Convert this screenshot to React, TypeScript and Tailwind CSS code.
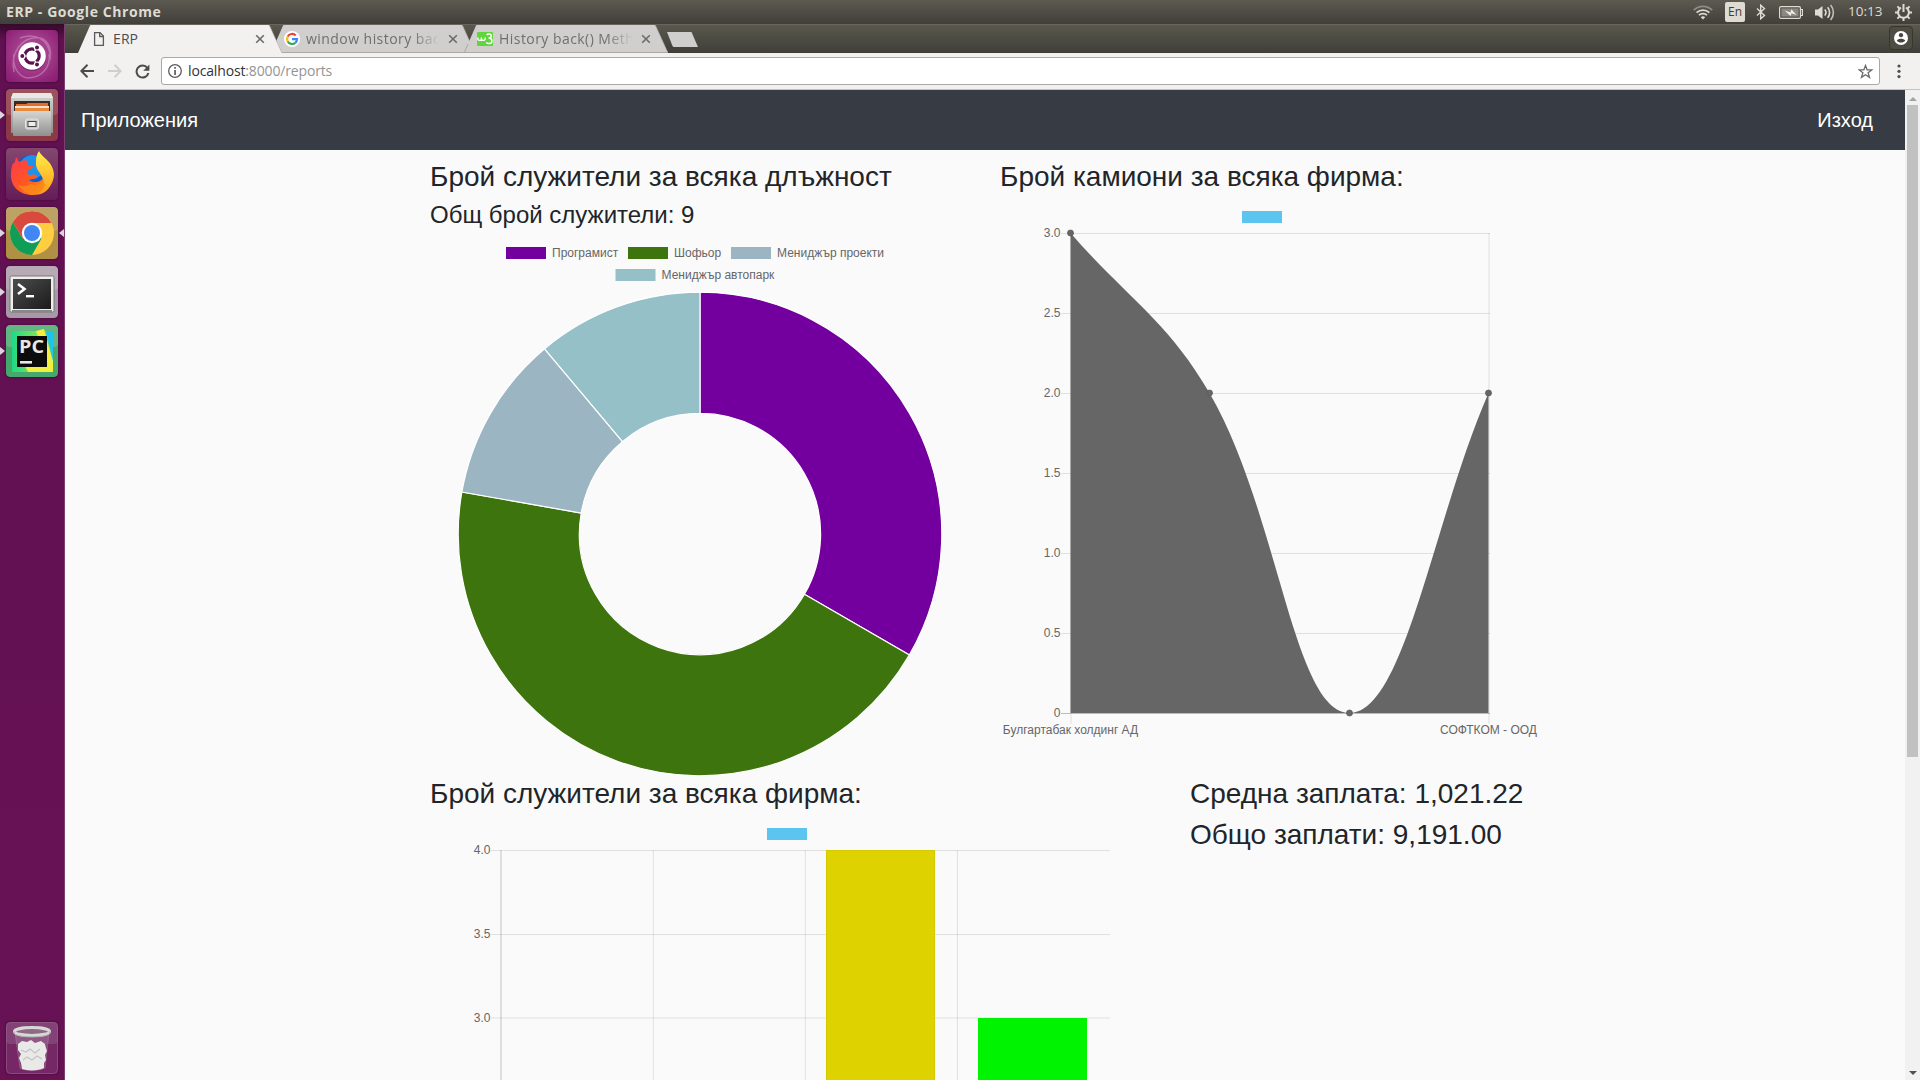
import React from "react";

type Slice = { label: string; value: number; color: string };

const positions: Slice[] = [
  { label: "Програмист", value: 3, color: "#73009e" },
  { label: "Шофьор", value: 4, color: "#3d740d" },
  { label: "Мениджър проекти", value: 1, color: "#9cb5c2" },
  { label: "Мениджър автопарк", value: 1, color: "#96c0c8" },
];

const chartFont = "font-['Liberation_Sans',Arial,sans-serif] text-[12px]";

function WifiIcon() {
  return (
    <svg width="20" height="15" viewBox="0 0 20 15" fill="none" stroke="#dfdbd2" strokeWidth="1.7">
      <path d="M.8 5.2a13 13 0 0 1 18.4 0" stroke="#8f8c84" />
      <path d="M3.6 7.6a9.3 9.3 0 0 1 12.8 0" />
      <path d="M6 10.2a5.8 5.8 0 0 1 8 0" />
      <path d="M7.8 12.2a3.2 3.2 0 0 1 4.4 0L10 14.5z" fill="#dfdbd2" stroke="none" />
    </svg>
  );
}

function BluetoothIcon() {
  return (
    <svg width="10" height="16" viewBox="0 0 10 16" fill="none" stroke="#dfdbd2" strokeWidth="1.4">
      <path d="M1 4.5l7.5 7-3.8 3.3V1.2l3.8 3.3L1 11.5" />
    </svg>
  );
}

function BatteryIcon() {
  return (
    <svg width="24" height="13" viewBox="0 0 24 13">
      <rect x=".6" y=".6" width="20.8" height="11.8" rx="1.4" fill="none" stroke="#dfdbd2" strokeWidth="1.2" />
      <rect x="2.4" y="2.4" width="17.2" height="8.2" fill="#8b8881" />
      <path d="M22 3.5h1.4v6H22" fill="none" stroke="#dfdbd2" strokeWidth="1.2" />
      <path d="M5.500 4.500l6 1.900.8-3.200L17.500 9l-5-1.700-.8 2.700z" fill="#f2efe8" />
    </svg>
  );
}

function VolumeIcon() {
  return (
    <svg width="20" height="17" viewBox="0 0 20 17" fill="none" stroke="#dfdbd2" strokeWidth="1.6">
      <path d="M0 5.5h3L7.5 2v13L3 11.5H0z" fill="#dfdbd2" stroke="none" />
      <path d="M9.7 5.5a4.6 4.6 0 0 1 0 6" />
      <path d="M12.6 3.2a8 8 0 0 1 0 10.6" />
      <path d="M15.6 1a11.5 11.5 0 0 1 0 15" stroke="#c2beb6" />
    </svg>
  );
}

function SessionIcon() {
  return (
    <svg width="17" height="17" viewBox="0 0 17 17" fill="none" stroke="#dfdbd2">
      <path d="M6 3.6a5.4 5.4 0 1 0 5 0" strokeWidth="2" />
      <path d="M8.5 0v8" strokeWidth="2" />
      <path d="M2.4 2.4l2 2M14.6 2.4l-2 2M0 8.5h3M14 8.5h3M2.4 14.6l2-2M14.6 14.6l-2-2M8.5 14v3" strokeWidth="2" />
    </svg>
  );
}

function TopPanel() {
  return (
    <header className="flex h-6 shrink-0 items-center justify-between bg-gradient-to-b from-[#5c5a50] to-[#403f3a] pl-1.5 pr-2 text-[#dfdbd2]">
      <div className="mb-[2px] whitespace-nowrap font-['Open_Sans','Noto_Sans',sans-serif] text-[14px] font-bold tracking-[0.58px]">ERP - Google Chrome</div>
      <div className="flex items-center">
        <WifiIcon />
        <div className="ml-3 flex h-5 w-5 items-center justify-center rounded-[2px] bg-[#dfdbd2] font-['Open_Sans','Noto_Sans',sans-serif] text-[12px] text-[#3c3b37]">En</div>
        <div className="ml-[11px]"><BluetoothIcon /></div>
        <div className="ml-[13px]"><BatteryIcon /></div>
        <div className="ml-3"><VolumeIcon /></div>
        <div className="mb-[1px] ml-[13px] w-[36px] whitespace-nowrap font-['Open_Sans','Noto_Sans',sans-serif] text-[13.5px] tracking-normal">10:13</div>
        <div className="ml-[11px]"><SessionIcon /></div>
      </div>
    </header>
  );
}

function UbuntuIcon() {
  return (
    <svg width="52" height="52" viewBox="0 0 52 52">
      <defs>
        <radialGradient id="dash" cx="50%" cy="45%" r="65%">
          <stop offset="0" stopColor="#b65aa0" />
          <stop offset="1" stopColor="#8d1f74" />
        </radialGradient>
      </defs>
      <rect width="52" height="52" rx="4" fill="url(#dash)" />
      <path d="M8 42C4 22 16 6 34 8c8 2 12 10 10 22M43 24c2 14-8 24-22 24C12 46 6 36 8 24M14 8c16-6 28 2 30 16" fill="none" stroke="#d79bc9" strokeOpacity=".5" strokeWidth="1.5" />
      <circle cx="26" cy="27" r="14" fill="#5d1250" opacity=".5" />
      <circle cx="26" cy="26" r="13.8" fill="#fff" />
      <circle cx="26" cy="26" r="7.2" fill="none" stroke="#5d1250" strokeWidth="3.2" />
      <g stroke="#fff" strokeWidth="1.2">
        <path d="M26 26L15 26M26 26l6-10.4M26 26l6 10.4" />
        <circle cx="16.3" cy="26" r="2.6" fill="#5d1250" />
        <circle cx="31" cy="17.4" r="2.6" fill="#5d1250" />
        <circle cx="31" cy="34.6" r="2.6" fill="#5d1250" />
      </g>
      <circle cx="26" cy="26" r="5" fill="#fff" />
    </svg>
  );
}

function FilesIcon() {
  return (
    <svg width="52" height="52" viewBox="0 0 52 52">
      <defs>
        <linearGradient id="cab" x1="0" y1="0" x2="0" y2="1">
          <stop offset="0" stopColor="#d6d6d4" />
          <stop offset="1" stopColor="#8f8f8d" />
        </linearGradient>
      </defs>
      <rect width="52" height="52" rx="4" fill="#8c3846" />
      <rect width="52" height="26" rx="4" fill="#a9636b" opacity=".6" />
      <path d="M7 4h38l2 5v35H5V9z" fill="url(#cab)" />
      <path d="M7 4h38l2 5H5z" fill="#e8e8e6" />
      <rect x="8" y="12" width="36" height="11" fill="#3b2a24" />
      <path d="M10 15h10l2-1h20v9H10z" fill="#e26f2a" />
      <rect x="9" y="17" width="34" height="2" fill="#f6e3cf" />
      <rect x="9" y="19" width="34" height="4" fill="#ea8a3b" />
      <rect x="7" y="22" width="38" height="25" rx="1" fill="url(#cab)" />
      <rect x="19.5" y="30" width="13" height="10" rx="2" fill="#c9c9c7" stroke="#e4e4e2" />
      <rect x="22" y="32.5" width="8" height="5" fill="#eee" stroke="#444" />
    </svg>
  );
}

function FirefoxIcon() {
  return (
    <svg width="52" height="52" viewBox="0 0 52 52">
      <defs>
        <linearGradient id="ffa" x1="0" y1="0" x2="1" y2="1">
          <stop offset="0" stopColor="#ff3750" />
          <stop offset=".55" stopColor="#ff5a1f" />
          <stop offset="1" stopColor="#ffb01f" />
        </linearGradient>
        <linearGradient id="ffb" x1="0" y1="0" x2="0" y2="1">
          <stop offset="0" stopColor="#fff14a" />
          <stop offset="1" stopColor="#ff9a1a" />
        </linearGradient>
        <linearGradient id="fft" x1="0" y1="0" x2="0" y2="1">
          <stop offset="0" stopColor="#84486f" />
          <stop offset="1" stopColor="#651c58" />
        </linearGradient>
      </defs>
      <rect width="52" height="52" rx="4" fill="url(#fft)" />
      <circle cx="26" cy="25" r="18" fill="#0a5fd0" />
      <circle cx="26" cy="19" r="12" fill="#249cf2" opacity=".8" />
      <path d="M10 9c2 2 2 4 3 5 3-2 7-2 9-1-1 2-1 4 2 5h3c0 2-3 4-6 5 0 3 1 4 4 4 3-1 6 0 6 2-2 2-6 2-8 3 5 4 13 2 16-4l6 8C42 44 35 47 27 47 13 47 4 38 5 25c0-4 1-7 2-10 1 1 2 0 3-6z" fill="url(#ffa)" />
      <path d="M33 3c3 7 14 10 15 23 0 9-6 17-14 20 4-6 5-12 2-17-2-5-7-8-6-16 0-4 1-7 3-10z" fill="url(#ffb)" />
      <path d="M25 36c6 3 11 0 12-6l2 8c-2 4-6 7-10 8-8 0-14-4-17-9 4 2 9 1 13-1z" fill="#f98a17" opacity=".75" />
    </svg>
  );
}

function ChromeIcon() {
  return (
    <svg width="52" height="52" viewBox="0 0 52 52">
      <rect width="52" height="52" rx="4" fill="#af9044" />
      <rect width="52" height="24" rx="4" fill="#c5b07c" opacity=".6" />
      <circle cx="26" cy="26" r="22" fill="#ffcd40" />
      <path d="M6.95 15A22 22 0 0 0 26 48l9.5-16.500L26 26l-9.500 5.500z" fill="#0f9d58" />
      <path d="M6.95 15A22 22 0 0 1 45.400 16H26L16.500 31.500z" fill="#d9493e" />
      <circle cx="26" cy="26" r="10.2" fill="#fff" />
      <circle cx="26" cy="26" r="8" fill="#4285f4" />
    </svg>
  );
}

function TerminalIcon() {
  return (
    <svg width="52" height="52" viewBox="0 0 52 52">
      <defs>
        <linearGradient id="term" x1="0" y1="0" x2="1" y2="1">
          <stop offset="0" stopColor="#4c4c4c" />
          <stop offset="1" stopColor="#1b1b1b" />
        </linearGradient>
      </defs>
      <rect width="52" height="52" rx="4" fill="#a798a6" />
      <rect width="52" height="24" rx="4" fill="#bdb2bc" opacity=".7" />
      <rect x="4" y="10" width="44" height="36" rx="1.5" fill="#eeeeec" stroke="#777" />
      <rect x="7" y="13" width="38" height="30" fill="url(#term)" />
      <path d="M12 18l6.5 5L12 28" fill="none" stroke="#fff" strokeWidth="2.6" />
      <rect x="20" y="29" width="8" height="2.4" fill="#fff" />
      <rect x="6" y="44" width="40" height="2" fill="#888" />
    </svg>
  );
}

function PyCharmIcon() {
  return (
    <svg width="52" height="52" viewBox="0 0 52 52">
      <defs>
        <linearGradient id="pyc" x1="0" y1="0" x2="1" y2="0">
          <stop offset="0" stopColor="#1fd987" />
          <stop offset=".6" stopColor="#7fe45a" />
          <stop offset="1" stopColor="#23c8e0" />
        </linearGradient>
      </defs>
      <rect width="52" height="52" rx="4" fill="#45a96c" />
      <rect width="52" height="22" rx="4" fill="#6dbc8c" opacity=".7" />
      <rect x="6" y="6" width="41" height="41" fill="url(#pyc)" />
      <path d="M30 6l8-2 9 32v11H22l-4-8 20-10z" fill="#f3ef3f" />
      <path d="M40 6h7v24z" fill="#1fc4ee" />
      <rect x="11" y="11" width="30" height="31" fill="#0c0c0c" />
      <text x="13" y="28" fill="#e8e8e8" textLength="25" lengthAdjust="spacingAndGlyphs" className="font-['Open_Sans'] text-[18px] font-bold">PC</text>
      <rect x="14" y="36" width="12" height="2.6" fill="#e8e8e8" />
    </svg>
  );
}

function TrashIcon() {
  return (
    <svg width="52" height="52" viewBox="0 0 52 52">
      <rect x=".5" y=".5" width="51" height="51" rx="4" fill="#762765" stroke="#8a4a7c" />
      <rect width="52" height="22" rx="4" fill="#95648b" opacity=".45" />
      <path d="M9 10l5 36c4 3 20 3 25 0l4-36z" fill="#a882a0" opacity=".35" stroke="#c9b4c5" />
      <path d="M12 22l4-3 5 1 4-2 4 3 6-2 4 3 1 4 1 3-2 4 1 5-2 3v5c-5 3-17 3-22 1l-1-6-2-5 2-4-3-4z" fill="#e9e9e7" />
      <path d="M15 28l5 2 4-3 5 4 5-4M17 38l4-3 5 3 5-4 5 3" fill="none" stroke="#c3c3c1" strokeWidth="1.100" />
      <ellipse cx="26" cy="9.5" rx="17.5" ry="4" fill="#8d6a86" stroke="#d8d8d6" strokeWidth="3" />
      <path d="M8.500 9.500v2c3 4.500 32 4.500 35 0v-2" fill="none" stroke="#b3b3b1" strokeWidth="1" />
    </svg>
  );
}

function LauncherItem({ children, running = false, focused = false }: { children: React.ReactNode; running?: boolean; focused?: boolean }) {
  return (
    <div className="flex h-[52px] w-[65px] items-center justify-between">
      <svg width="6" height="8" viewBox="0 0 6 8" className="shrink-0">{running && <path d="M0 0l5 4-5 4z" fill="#dcd6dc" />}</svg>
      <div className="h-[52px] w-[52px] shrink-0 overflow-hidden rounded-[4px] shadow-[0_0_3px_rgba(0,0,0,0.4)]">{children}</div>
      <svg width="7" height="8" viewBox="0 0 7 8" className="shrink-0">{focused && <path d="M6 0L1 4l5 4z" fill="#dcd6dc" />}</svg>
    </div>
  );
}

function Launcher() {
  return (
    <aside className="flex w-[65px] shrink-0 flex-col justify-between bg-[#651154] bg-gradient-to-b from-[#350a2b] via-[#611051] via-[1.5%] to-[#671255] pb-[6px] pt-[6px] shadow-[inset_-1px_0_0_#7d3f70]">
      <div className="flex flex-col gap-[7px]">
        <LauncherItem><UbuntuIcon /></LauncherItem>
        <LauncherItem running><FilesIcon /></LauncherItem>
        <LauncherItem><FirefoxIcon /></LauncherItem>
        <LauncherItem running focused><ChromeIcon /></LauncherItem>
        <LauncherItem running><TerminalIcon /></LauncherItem>
        <LauncherItem running><PyCharmIcon /></LauncherItem>
      </div>
      <LauncherItem><TrashIcon /></LauncherItem>
    </aside>
  );
}

function PageIcon() {
  return (
    <svg width="16" height="16" viewBox="0 0 16 16" fill="none" stroke="#5a5a5a" strokeWidth="1.3">
      <path d="M3.600 1.600h5.400l3.400 3.500v9.300H3.600z" />
      <path d="M8.700 1.800v3.700h3.600" />
    </svg>
  );
}

function GoogleIcon() {
  return (
    <svg width="16" height="16" viewBox="0 0 16 16" fill="none" strokeWidth="2.200">
      <circle cx="8" cy="8" r="8" fill="#fff" />
      <path d="M11.700 4.500A5 5 0 0 0 3.700 5.500" stroke="#ea4335" />
      <path d="M3.700 5.500a5 5 0 0 0 0 5" stroke="#fbbc05" />
      <path d="M3.700 10.500a5 5 0 0 0 7.600 1.300" stroke="#34a853" />
      <path d="M11.300 11.800A5 5 0 0 0 13 8.200H8" stroke="#4285f4" />
    </svg>
  );
}

function SchoolsIcon() {
  return (
    <svg width="16" height="14" viewBox="0 0 16 14" fill="none" stroke="#fff">
      <rect width="16" height="14" rx="1" fill="#5fd63b" stroke="none" />
      <path d="M.8 5.500v1.200c0 2.200 3.600 2.200 3.600 0V5.500v1.200c0 2.200 3.800 2.200 3.800 0V5.500" strokeWidth="1.400" />
      <path d="M9.800 3c1-1.400 4.500-1.300 4.500 1 0 1.700-1.600 2-2.800 2 1.600 0 3.400.6 3.400 2.900 0 3-4.600 3.400-5.600 1.300" strokeWidth="1.500" />
    </svg>
  );
}

function Tab({ icon, title, active = false }: { icon: React.ReactNode; title: string; active?: boolean }) {
  return (
    <div className={active ? "relative z-30 h-[29px] w-[204px]" : "relative -ml-[11px] h-[29px] w-[204px]"}>
      <svg width="204" height="29" viewBox="0 0 204 29" className="absolute inset-0">
        <path d="M0 29L12 1.500Q12.300 1 13 1H190.500Q191.200 1 191.500 1.500L204 29z" fill={active ? "#f2f1f0" : "#d0cfcd"} />
        {!active && <path d="M0 28.500h204M.5 28L4 20" stroke="#aaa9a5" fill="none" />}
        <path d="M191.500 1.500L204 29" stroke={active ? "#a9a8a4" : "#b3b2ae"} strokeWidth=".6" fill="none" />
      </svg>
      <div className="relative flex h-full items-center pl-[13px] pt-[1px]">
        <div className="flex h-4 w-4 shrink-0 items-center justify-center">{icon}</div>
        <div className={active
          ? "mb-[2px] ml-1.5 w-[134px] overflow-hidden whitespace-nowrap font-['Open_Sans','Noto_Sans',sans-serif] text-[14px] tracking-[0.1px] text-[#4b4d52]"
          : "mb-[2px] ml-1.5 w-[134px] overflow-hidden whitespace-nowrap font-['Open_Sans','Noto_Sans',sans-serif] text-[14px] tracking-[0.45px] text-[#6f6e72] [mask-image:linear-gradient(to_right,black_80%,transparent_100%)]"}>
          {title}
        </div>
        <svg width="10" height="10" viewBox="0 0 10 10" className="ml-[8px] shrink-0">
          <path d="M1.200 1.200l7.600 7.600M8.800 1.200L1.200 8.800" stroke="#6b6b6b" strokeWidth="1.600" />
        </svg>
      </div>
    </div>
  );
}

function TabStrip() {
  return (
    <div className="flex h-[29px] shrink-0 justify-between bg-gradient-to-b from-[#5a594e] to-[#3f3e39] pl-[13px] pr-[7px] shadow-[inset_0_1px_0_#68665a]">
      <div className="flex">
        <Tab active icon={<PageIcon />} title="ERP" />
        <Tab icon={<GoogleIcon />} title="window history back" />
        <Tab icon={<SchoolsIcon />} title="History back() Method" />
        <svg width="34" height="16" viewBox="0 0 34 16" className="-ml-[2px] mt-2">
          <path d="M1 0H25.500L32 15H8Q7 15 6.500 14z" fill="#d0cfcd" />
        </svg>
      </div>
      <div className="mt-[2px] flex h-6 w-6 items-center justify-center rounded-[4px] border border-[#37362f] bg-[#4e4d44]">
        <svg width="14" height="14" viewBox="0 0 14 14">
          <circle cx="7" cy="7" r="7" fill="#fff" />
          <circle cx="7" cy="4.200" r="2.100" fill="#45443e" />
          <path d="M2.800 9.500c1.500-2.400 6.900-2.400 8.400 0-1.800 2.700-6.600 2.700-8.400 0z" fill="#45443e" />
        </svg>
      </div>
    </div>
  );
}

function Toolbar() {
  return (
    <div className="flex h-[37px] shrink-0 items-center border-b border-[#bfc3c4] bg-[#f2f1f0] pl-[15px]">
      <svg width="14" height="14" viewBox="0 0 14 14" fill="none" stroke="#4b4b4b" strokeWidth="2"><path d="M14 7H1.500M7.500.8L1.300 7l6.200 6.200" /></svg>
      <svg width="14" height="14" viewBox="0 0 14 14" fill="none" stroke="#d0cfce" strokeWidth="2" className="ml-[14px]"><path d="M0 7h12.500M6.500.8L12.700 7l-6.200 6.200" /></svg>
      <svg width="15" height="15" viewBox="0 0 15 15" fill="none" className="ml-[13px]"><path d="M12.400 4A6 6 0 1 0 13.400 9" stroke="#4b4b4b" strokeWidth="2" /><path d="M14.400.5v6.200H8.200z" fill="#4b4b4b" /></svg>
      <div className="ml-[11px] flex h-[28px] w-[1719px] items-center justify-between rounded-[3px] border border-[#a9a8a6] bg-white pl-[6px] pr-[6px]">
        <div className="flex items-center">
          <svg width="14" height="14" viewBox="0 0 14 14"><circle cx="7" cy="7" r="6.300" fill="none" stroke="#5c5c5c" strokeWidth="1.300" /><rect x="6.200" y="3" width="1.700" height="1.700" fill="#5c5c5c" /><rect x="6.200" y="6" width="1.700" height="5" fill="#5c5c5c" /></svg>
          <div className="mb-[2px] ml-[6px] whitespace-nowrap font-['Open_Sans','Noto_Sans',sans-serif] text-[14px] tracking-[-0.15px] text-[#949494]"><span className="text-[#303338]">localhost</span>:8000/reports</div>
        </div>
        <svg width="15" height="15" viewBox="0 0 15 15" fill="none" stroke="#6a6a6a" strokeWidth="1.300"><path d="M7.500 1.500l1.600 4.300 4.700.1-3.700 2.900 1.400 4.600-4-2.700-4 2.700 1.400-4.600L1.200 5.900l4.700-.1z" /></svg>
      </div>
      <svg width="4" height="15" viewBox="0 0 4 15" fill="#505050" className="ml-[17px]"><circle cx="2" cy="2" r="1.600" /><circle cx="2" cy="7.300" r="1.600" /><circle cx="2" cy="12.600" r="1.600" /></svg>
    </div>
  );
}

function polar(cx: number, cy: number, r: number, fraction: number) {
  const a = fraction * Math.PI * 2 - Math.PI / 2;
  return `${(cx + r * Math.cos(a)).toFixed(2)} ${(cy + r * Math.sin(a)).toFixed(2)}`;
}

function DoughnutChart() {
  const cx = 270, cy = 298, outer = 241.800, inner = 120.600;
  const total = positions.reduce((sum, p) => sum + p.value, 0);
  const legend = [
    { x: 76, y: 11 },
    { x: 198, y: 11 },
    { x: 301, y: 11 },
    { x: 185.500, y: 33 },
  ];
  let start = 0;
  return (
    <svg width="540" height="540" viewBox="0 0 540 540" className="block">
      {positions.map((p, i) => {
        const from = start / total;
        start += p.value;
        const to = start / total;
        const d = `M${polar(cx, cy, outer, from)}A${outer} ${outer} 0 0 1 ${polar(cx, cy, outer, to)}L${polar(cx, cy, inner, to)}A${inner} ${inner} 0 0 0 ${polar(cx, cy, inner, from)}Z`;
        return <path key={i} d={d} fill={p.color} stroke="#fff" strokeWidth="1.200" />;
      })}
      {positions.map((p, i) => (
        <g key={p.label}>
          <rect x={legend[i].x} y={legend[i].y} width="40" height="12" fill={p.color} />
          <text x={legend[i].x + 46} y={legend[i].y + 10} fill="#666" className={chartFont}>{p.label}</text>
        </g>
      ))}
    </svg>
  );
}

function LineChart() {
  const ticks = ["3.0", "2.5", "2.0", "1.5", "1.0", "0.5", "0"];
  return (
    <svg width="560" height="540" viewBox="0 0 560 540" className="block">
      <rect x="242" y="11" width="40" height="12" fill="#5bc5ef" />
      {ticks.map((t, i) => (
        <g key={t}>
          <path d={`M61 ${33.500 + i * 80}H490`} stroke="#000" strokeOpacity={t === "0" ? 0.250 : 0.100} />
          <text x="60.500" y={37 + i * 80} textAnchor="end" fill="#666" className={chartFont}>{t}</text>
        </g>
      ))}
      <path d="M71 33V524M489 33V524" stroke="#000" strokeOpacity=".1" />
      <path d="M70.500 33C126.100 97 167.400 120.500 209.500 193C278.800 312.500 293.200 513 349.500 513C404.800 513 432.700 321 488.500 193V513H70.500Z" fill="#666" />
      {[[70.500, 33], [209.500, 193], [349.500, 513], [488.500, 193]].map(([x, y]) => (
        <circle key={x} cx={x} cy={y} r="3" fill="#666" stroke="#5c5c5c" strokeWidth=".8" />
      ))}
      <text x="70.500" y="534" textAnchor="middle" fill="#666" className={chartFont}>Булгартабак холдинг АД</text>
      <text x="488.500" y="534" textAnchor="middle" fill="#666" className={chartFont}>СОФТКОМ - ООД</text>
    </svg>
  );
}

function BarChart() {
  return (
    <svg width="730" height="263" viewBox="0 0 730 263" className="block">
      <rect x="337" y="11" width="40" height="12" fill="#5bc5ef" />
      <g stroke="#000" strokeOpacity=".1">
        <path d="M61 33.500H680M61 117.500H680M61 201H680" />
        <path d="M71 33V263" strokeOpacity=".22" />
        <path d="M223.300 33V263M375.300 33V263M527.400 33V263" />
      </g>
      {["4.0", "3.5", "3.0"].map((t, i) => (
        <text key={t} x="60.500" y={37 + i * 84} textAnchor="end" fill="#666" className={chartFont}>{t}</text>
      ))}
      <rect x="396" y="33" width="109" height="240" fill="#ded200" />
      <rect x="548" y="201" width="109" height="72" fill="#00f300" />
      <path d="M396.500 263V33.500H504.500V263" fill="none" stroke="#000" strokeOpacity=".04" />
    </svg>
  );
}

function Heading({ children }: { children: React.ReactNode }) {
  return <h3 className="mb-[7px] h-[34px] whitespace-nowrap text-[28px] leading-[36px]">{children}</h3>;
}

function Page() {
  return (
    <main className="flex min-w-0 flex-1 flex-col bg-[#fafafa] font-['Liberation_Sans',Arial,sans-serif] text-[#212529]">
      <nav className="flex h-[60px] shrink-0 items-center justify-between bg-[#373b43] pl-4 pr-8 text-[20px] text-white">
        <span>Приложения</span>
        <span>Изход</span>
      </nav>
      <div className="mx-auto w-[1140px] pt-[9px]">
        <div className="flex h-[617px]">
          <section className="w-[570px] px-[15px]">
            <Heading>Брой служители за всяка длъжност</Heading>
            <h4 className="mb-[7px] h-[29px] text-[24px] leading-[29px]">Общ брой служители: 9</h4>
            <DoughnutChart />
          </section>
          <section className="w-[570px] pl-[15px]">
            <Heading>Брой камиони за всяка фирма:</Heading>
            <LineChart />
          </section>
        </div>
        <div className="flex">
          <section className="w-[760px] px-[15px]">
            <Heading>Брой служители за всяка фирма:</Heading>
            <BarChart />
          </section>
          <section className="w-[380px] px-[15px]">
            <Heading>Средна заплата: 1,021.22</Heading>
            <Heading>Общо заплати: 9,191.00</Heading>
          </section>
        </div>
      </div>
    </main>
  );
}

function Scrollbar() {
  return (
    <div className="flex w-[15px] shrink-0 flex-col items-center bg-[#f1f1f1]">
      <div className="flex h-[15px] items-center justify-center"><svg width="8" height="4" viewBox="0 0 8 4" className="mt-[2px]"><path d="M0 4l4-4 4 4z" fill="#a3a3a3" /></svg></div>
      <div className="h-[652px] w-[11px] bg-[#c1c1c1]" />
      <div className="mt-auto flex h-[15px] items-center justify-center"><svg width="8" height="4" viewBox="0 0 8 4"><path d="M0 0l4 4 4-4z" fill="#505050" /></svg></div>
    </div>
  );
}

export default function App() {
  return (
    <div className="flex h-[1080px] w-[1920px] flex-col overflow-hidden">
      <TopPanel />
      <div className="flex min-h-0 flex-1">
        <Launcher />
        <div className="flex min-w-0 flex-1 flex-col">
          <TabStrip />
          <Toolbar />
          <div className="flex min-h-0 flex-1 overflow-hidden">
            <Page />
            <Scrollbar />
          </div>
        </div>
      </div>
    </div>
  );
}
